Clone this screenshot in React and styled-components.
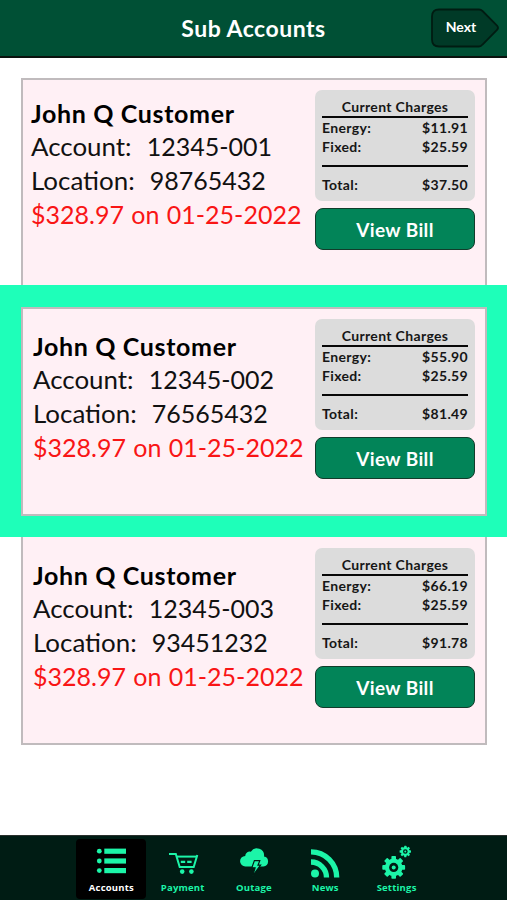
import React, { useState } from 'react';
import styled, { createGlobalStyle } from 'styled-components';

const MINT = '#1cf5a8';

const GlobalStyle = createGlobalStyle`
  * {
    box-sizing: border-box;
  }
  body {
    margin: 0;
    background: #fff;
    font-family: Lato, 'Liberation Sans', sans-serif;
  }
  button {
    font-family: inherit;
    padding: 0;
    border: 0;
    background: none;
    cursor: pointer;
  }
`;

const Page = styled.div`
  width: 507px;
  height: 900px;
  display: flex;
  flex-direction: column;
  overflow: hidden;
`;

const Header = styled.header`
  height: 58px;
  flex-shrink: 0;
  display: grid;
  grid-template-columns: 76px 1fr 76px;
  align-items: center;
  background: #005035;
  border-bottom: 2px solid #0a120e;
`;

const Title = styled.h1`
  grid-column: 2;
  margin: 0;
  text-align: center;
  color: #fff;
  font-size: 23px;
  font-weight: 700;
  letter-spacing: 0.5px;
  line-height: 55px;
`;

const NextButton = styled.button`
  display: grid;
  width: 70px;
  height: 42px;

  svg,
  span {
    grid-area: 1 / 1;
  }
  span {
    color: #fff;
    font-size: 14px;
    font-weight: 700;
    line-height: 40px;
    width: 60px;
    text-align: center;
  }
`;

const List = styled.main`
  flex: 1;
  padding-top: 20px;
`;

const Row = styled.div`
  padding: ${(props) => (props.$selected ? '22px 20px 21px 21px' : '0 20px 0 21px')};
  background: ${(props) => (props.$selected ? '#1effb9' : 'transparent')};
`;

const Card = styled.section`
  display: flex;
  justify-content: space-between;
  height: ${(props) => (props.$selected ? 209 : 208)}px;
  padding: ${(props) => (props.$edge === 'bottom' ? 11 : 10)}px 10px 0 8px;
  background: #fff0f5;
  border: 2px solid #c0bbbd;
  ${(props) => props.$edge === 'top' && 'border-bottom: 0; height: 207px;'}
  ${(props) => props.$edge === 'bottom' && 'border-top: 0;'}
`;

const Info = styled.div`
  padding: ${(props) => (props.$first ? '7px 0 0 0' : '11px 0 0 2px')};
  white-space: pre;
  color: #111;
`;

const Name = styled.div`
  font-size: 25px;
  font-weight: 700;
  letter-spacing: 0.65px;
  line-height: 33px;
  color: #000;
`;

const Line = styled.div`
  font-size: 25px;
  line-height: ${(props) => props.$height || 33}px;
`;

const Label = styled.span`
  font-size: 25.9px;
  line-height: 1;
  word-spacing: 0.9px;
`;

const Due = styled(Line)`
  color: #f91515;
  word-spacing: 1px;
`;

const Side = styled.div`
  width: 160px;
  flex-shrink: 0;
`;

const Charges = styled.div`
  height: 111px;
  padding: 7px 7px 0;
  border-radius: 7px;
  background: #dcdcdc;
  color: #161616;
  font-size: 14px;
  font-weight: 700;
  letter-spacing: 0.35px;
`;

const ChargesTitle = styled.div`
  height: 21px;
  line-height: 19px;
  text-align: center;
  border-bottom: 2px solid #080808;
`;

const ChargeRow = styled.div`
  display: flex;
  justify-content: space-between;
  line-height: 19px;
`;

const Rule = styled.div`
  height: 2px;
  margin: 9px 0 8px;
  background: #080808;
`;

const BillButton = styled.button`
  display: block;
  width: 160px;
  height: 42px;
  margin-top: 7px;
  border: 1.5px solid #123c2b;
  border-radius: 8px;
  background: #028458;
  color: #fff;
  font-size: 19px;
  font-weight: 700;
  letter-spacing: 0.4px;
  line-height: 39px;
`;

const NavBar = styled.nav`
  height: 65px;
  flex-shrink: 0;
  display: flex;
  justify-content: center;
  gap: 1.3px;
  padding: 3px 0 0 1px;
  background: #001c14;
  border-top: 1.5px solid #2a302d;
`;

const NavItem = styled.button`
  display: flex;
  flex-direction: column;
  align-items: center;
  justify-content: flex-start;
  width: 70px;
  height: 60px;
  padding-top: 4px;
  border-radius: 4px;
  background: ${(props) => (props.$active ? '#000' : 'transparent')};
  color: ${(props) => (props.$active ? '#fff' : MINT)};
  font-family: 'Open Sans', sans-serif;
  font-size: 9.5px;
  font-weight: 700;
  letter-spacing: 0.2px;

  svg {
    flex-shrink: 0;
  }
  span {
    line-height: 14px;
    margin-top: -2px;
  }
`;

const ListIcon = () => (
  <svg width="36" height="40" viewBox="0 0 36 40" fill={MINT}>
    {[8.2, 18, 27.6].map((y) => (
      <g key={y}>
        <circle cx="6.3" cy={y} r="2.4" />
        <rect x="11.3" y={y - 2.6} width="21.7" height="5.2" />
      </g>
    ))}
  </svg>
);

const CartIcon = () => (
  <svg width="36" height="40" viewBox="0 0 36 40" fill="none" stroke={MINT} strokeWidth="2">
    <path d="M4 11h6.8l3.9 13h14l3.6-12" />
    <path d="M11.4 13.6h20" />
    <path d="M15.8 18.9h4.4m2 0h4.4" strokeWidth="2.4" />
    <circle cx="17.2" cy="28.6" r="2.3" fill={MINT} stroke="none" />
    <circle cx="26.4" cy="28.6" r="2.3" fill={MINT} stroke="none" />
  </svg>
);

const StormIcon = () => (
  <svg width="36" height="40" viewBox="0 0 36 40" fill={MINT}>
    <path d="M9.5 23.5a5.3 5.3 0 0 1-.3-10.6 4.5 4.5 0 0 1 5.6-4.2 7.2 7.2 0 0 1 13.2 4.9 5 5 0 0 1 -.6 9.9z" />
    <path d="M18.4 17.6h5.4l-1.8 4.6h2.6L16.6 33l2.5-8.2h-3.3z" stroke="#001c14" strokeWidth="1.2" />
  </svg>
);

const NewsIcon = () => (
  <svg width="36" height="40" viewBox="0 0 36 40" fill="none" stroke={MINT} strokeWidth="5.3">
    <circle cx="8" cy="30.6" r="4" fill={MINT} stroke="none" />
    <path d="M4 19a15.5 15.5 0 0 1 15.5 15.5" />
    <path d="M4 8.8a25.7 25.7 0 0 1 25.7 25.7" />
  </svg>
);

const Gear = ({ x, y, scale }) => (
  <g transform={`translate(${x} ${y}) scale(${scale})`}>
    {[0, 45, 90, 135].map((angle) => (
      <rect key={angle} x="-2.3" y="-11.4" width="4.6" height="22.8" rx="0.8" transform={`rotate(${angle})`} />
    ))}
    <circle r="8.8" />
    <circle r="4.6" fill="#001c14" />
    <circle r="2" />
  </g>
);

const GearsIcon = () => (
  <svg width="36" height="40" viewBox="0 0 36 40" fill={MINT}>
    <Gear x={14.7} y={24.4} scale={1} />
    <Gear x={26.3} y={8.5} scale={0.5} />
  </svg>
);

const accounts = [
  { account: '12345-001', location: '98765432', energy: '$11.91', total: '$37.50', edge: 'top' },
  { account: '12345-002', location: '76565432', energy: '$55.90', total: '$81.49' },
  { account: '12345-003', location: '93451232', energy: '$66.19', total: '$91.78', edge: 'bottom' },
];

const tabs = [
  { label: 'Accounts', Icon: ListIcon },
  { label: 'Payment', Icon: CartIcon },
  { label: 'Outage', Icon: StormIcon },
  { label: 'News', Icon: NewsIcon },
  { label: 'Settings', Icon: GearsIcon },
];

const App = () => {
  const [selected, setSelected] = useState(1);
  const [activeTab, setActiveTab] = useState('Accounts');

  return (
    <>
      <GlobalStyle />
      <Page>
        <Header>
          <Title>Sub Accounts</Title>
          <NextButton>
            <svg width="70" height="42" viewBox="0 0 70 42">
              <path
                d="M8 2.5H48Q50 2.5 51.5 4L66 18.5Q68 20.8 66 23L51.5 37.5Q50 39.5 48 39.5H8Q1 39.5 1 32.5V9.5Q1 2.5 8 2.5Z"
                fill="#003a27"
                stroke="#001c12"
                strokeWidth="1.8"
              />
            </svg>
            <span>Next</span>
          </NextButton>
        </Header>

        <List>
          {accounts.map((item, index) => (
            <Row key={item.account} $selected={selected === index} onClick={() => setSelected(index)}>
              <Card $selected={selected === index} $edge={item.edge}>
                <Info $first={index === 0}>
                  <Name>John Q Customer</Name>
                  <Line><Label>Account:  </Label>{item.account}</Line>
                  <Line $height={35}><Label>Location:  </Label>{item.location}</Line>
                  <Due>$328.97 on 01-25-2022</Due>
                </Info>
                <Side>
                  <Charges>
                    <ChargesTitle>Current Charges</ChargesTitle>
                    <ChargeRow><span>Energy:</span><span>{item.energy}</span></ChargeRow>
                    <ChargeRow><span>Fixed:</span><span>$25.59</span></ChargeRow>
                    <Rule />
                    <ChargeRow><span>Total:</span><span>{item.total}</span></ChargeRow>
                  </Charges>
                  <BillButton>View Bill</BillButton>
                </Side>
              </Card>
            </Row>
          ))}
        </List>

        <NavBar>
          {tabs.map(({ label, Icon }) => (
            <NavItem key={label} $active={activeTab === label} onClick={() => setActiveTab(label)}>
              <Icon />
              <span>{label}</span>
            </NavItem>
          ))}
        </NavBar>
      </Page>
    </>
  );
};

export default App;
